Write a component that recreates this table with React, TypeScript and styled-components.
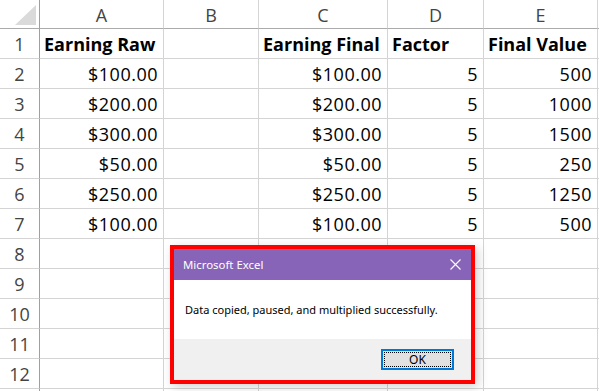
import React from 'react';
import styled, { createGlobalStyle } from 'styled-components';

const GlobalStyle = createGlobalStyle`
  html, body {
    margin: 0;
    padding: 0;
    background: #ffffff;
    overflow: hidden;
  }
  * {
    box-sizing: border-box;
  }
`;

const Page = styled.div`
  position: relative;
  width: 599px;
  height: 391px;
  overflow: hidden;
  background: #ffffff;
`;

const Grid = styled.div`
  display: grid;
  grid-template-columns: 40px 124px 95px 129px 96px 114px 1fr;
  grid-template-rows: 29px repeat(13, 30px);
  font-family: 'Open Sans', 'Liberation Sans', sans-serif;
  font-size: 18px;
  color: #000000;
`;

const Corner = styled.div`
  position: relative;
  border-right: 1px solid #9f9f9f;
  border-bottom: 1px solid #ababab;

  &::after {
    content: '';
    position: absolute;
    right: 3px;
    bottom: 3px;
    width: 0;
    height: 0;
    border-left: 21px solid transparent;
    border-bottom: 20px solid #dadada;
  }
`;

const ColHead = styled.div`
  display: flex;
  justify-content: center;
  align-items: center;
  padding-top: 1px;
  color: #444444;
  font-size: 18px;
  border-right: 1px solid #d4d4d4;
  border-bottom: 1px solid #ababab;
`;

const RowHead = styled.div`
  display: flex;
  justify-content: center;
  align-items: center;
  padding-top: 1px;
  color: #444444;
  font-size: 18px;
  border-right: 1px solid #9f9f9f;
  border-bottom: 1px solid #d4d4d4;
`;

const Cell = styled.div<{ $bold?: boolean; $align?: 'left' | 'right' }>`
  display: flex;
  align-items: center;
  justify-content: ${(p) => (p.$align === 'right' ? 'flex-end' : 'flex-start')};
  padding: 1px 5px 0 4px;
  white-space: nowrap;
  overflow: visible;
  font-weight: ${(p) => (p.$bold ? 700 : 400)};
  letter-spacing: ${(p) => (p.$align === 'right' ? '0.5px' : '0')};
  border-right: 1px solid #d4d4d4;
  border-bottom: 1px solid #d4d4d4;
`;

const Backdrop = styled.div`
  position: absolute;
  left: 170px;
  top: 245px;
  width: 305px;
  height: 139px;
  border: 4px solid #ff0000;
  box-shadow: 3px 3px 10px rgba(0, 0, 0, 0.18);
  display: flex;
  flex-direction: column;
  font-family: 'Noto Sans', 'Open Sans', sans-serif;
  font-size: 11px;
`;

const TitleBar = styled.div`
  height: 31px;
  background: #8764b8;
  color: #ffffff;
  display: flex;
  align-items: center;
  justify-content: space-between;
  padding: 0 10px 0 9px;
  font-size: 11.4px;
`;

const Body = styled.div`
  height: 59px;
  background: #ffffff;
  color: #000000;
  display: flex;
  align-items: center;
  padding: 0 0 0 11px;
`;

const Footer = styled.div`
  flex: 1;
  background: #f0f0f0;
  display: flex;
  justify-content: flex-end;
  align-items: flex-start;
  padding: 10px 17px 0 0;
`;

const OkButton = styled.button`
  position: relative;
  width: 73px;
  height: 21px;
  background: #e1e1e1;
  border: 2px solid #0078d7;
  font-family: 'Noto Sans', 'Open Sans', sans-serif;
  font-size: 12px;
  color: #000000;
  padding: 0;
  line-height: 16px;

  &::after {
    content: '';
    position: absolute;
    inset: 1px;
    border: 1px dotted #000000;
  }
`;

const Close = () => (
  <svg width="11" height="11" viewBox="0 0 11 11">
    <path d="M0.5 0.5 L10.5 10.5 M10.5 0.5 L0.5 10.5" stroke="#ffffff" strokeWidth="1.1" />
  </svg>
);

const columns = ['A', 'B', 'C', 'D', 'E', ''];

const rows = [
  ['$100.00', '$100.00', '5', '500'],
  ['$200.00', '$200.00', '5', '1000'],
  ['$300.00', '$300.00', '5', '1500'],
  ['$50.00', '$50.00', '5', '250'],
  ['$250.00', '$250.00', '5', '1250'],
  ['$100.00', '$100.00', '5', '500'],
];

export default function App() {
  return (
    <Page>
      <GlobalStyle />
      <Grid>
        <Corner />
        {columns.map((c, i) => (
          <ColHead key={i}>{c}</ColHead>
        ))}

        <RowHead>1</RowHead>
        <Cell $bold>Earning Raw</Cell>
        <Cell />
        <Cell $bold>Earning Final</Cell>
        <Cell $bold>Factor</Cell>
        <Cell $bold>Final Value</Cell>
        <Cell />

        {rows.map((r, i) => (
          <React.Fragment key={i}>
            <RowHead>{i + 2}</RowHead>
            <Cell $align="right">{r[0]}</Cell>
            <Cell />
            <Cell $align="right">{r[1]}</Cell>
            <Cell $align="right">{r[2]}</Cell>
            <Cell $align="right">{r[3]}</Cell>
            <Cell />
          </React.Fragment>
        ))}

        {['8', '9', '10', '11', '12', ''].map((n, i) => (
          <React.Fragment key={i}>
            <RowHead>{n}</RowHead>
            {columns.map((_, j) => (
              <Cell key={j} />
            ))}
          </React.Fragment>
        ))}
      </Grid>

      <Backdrop>
        <TitleBar>
          <span>Microsoft Excel</span>
          <Close />
        </TitleBar>
        <Body>Data copied, paused, and multiplied successfully.</Body>
        <Footer>
          <OkButton>OK</OkButton>
        </Footer>
      </Backdrop>
    </Page>
  );
}
